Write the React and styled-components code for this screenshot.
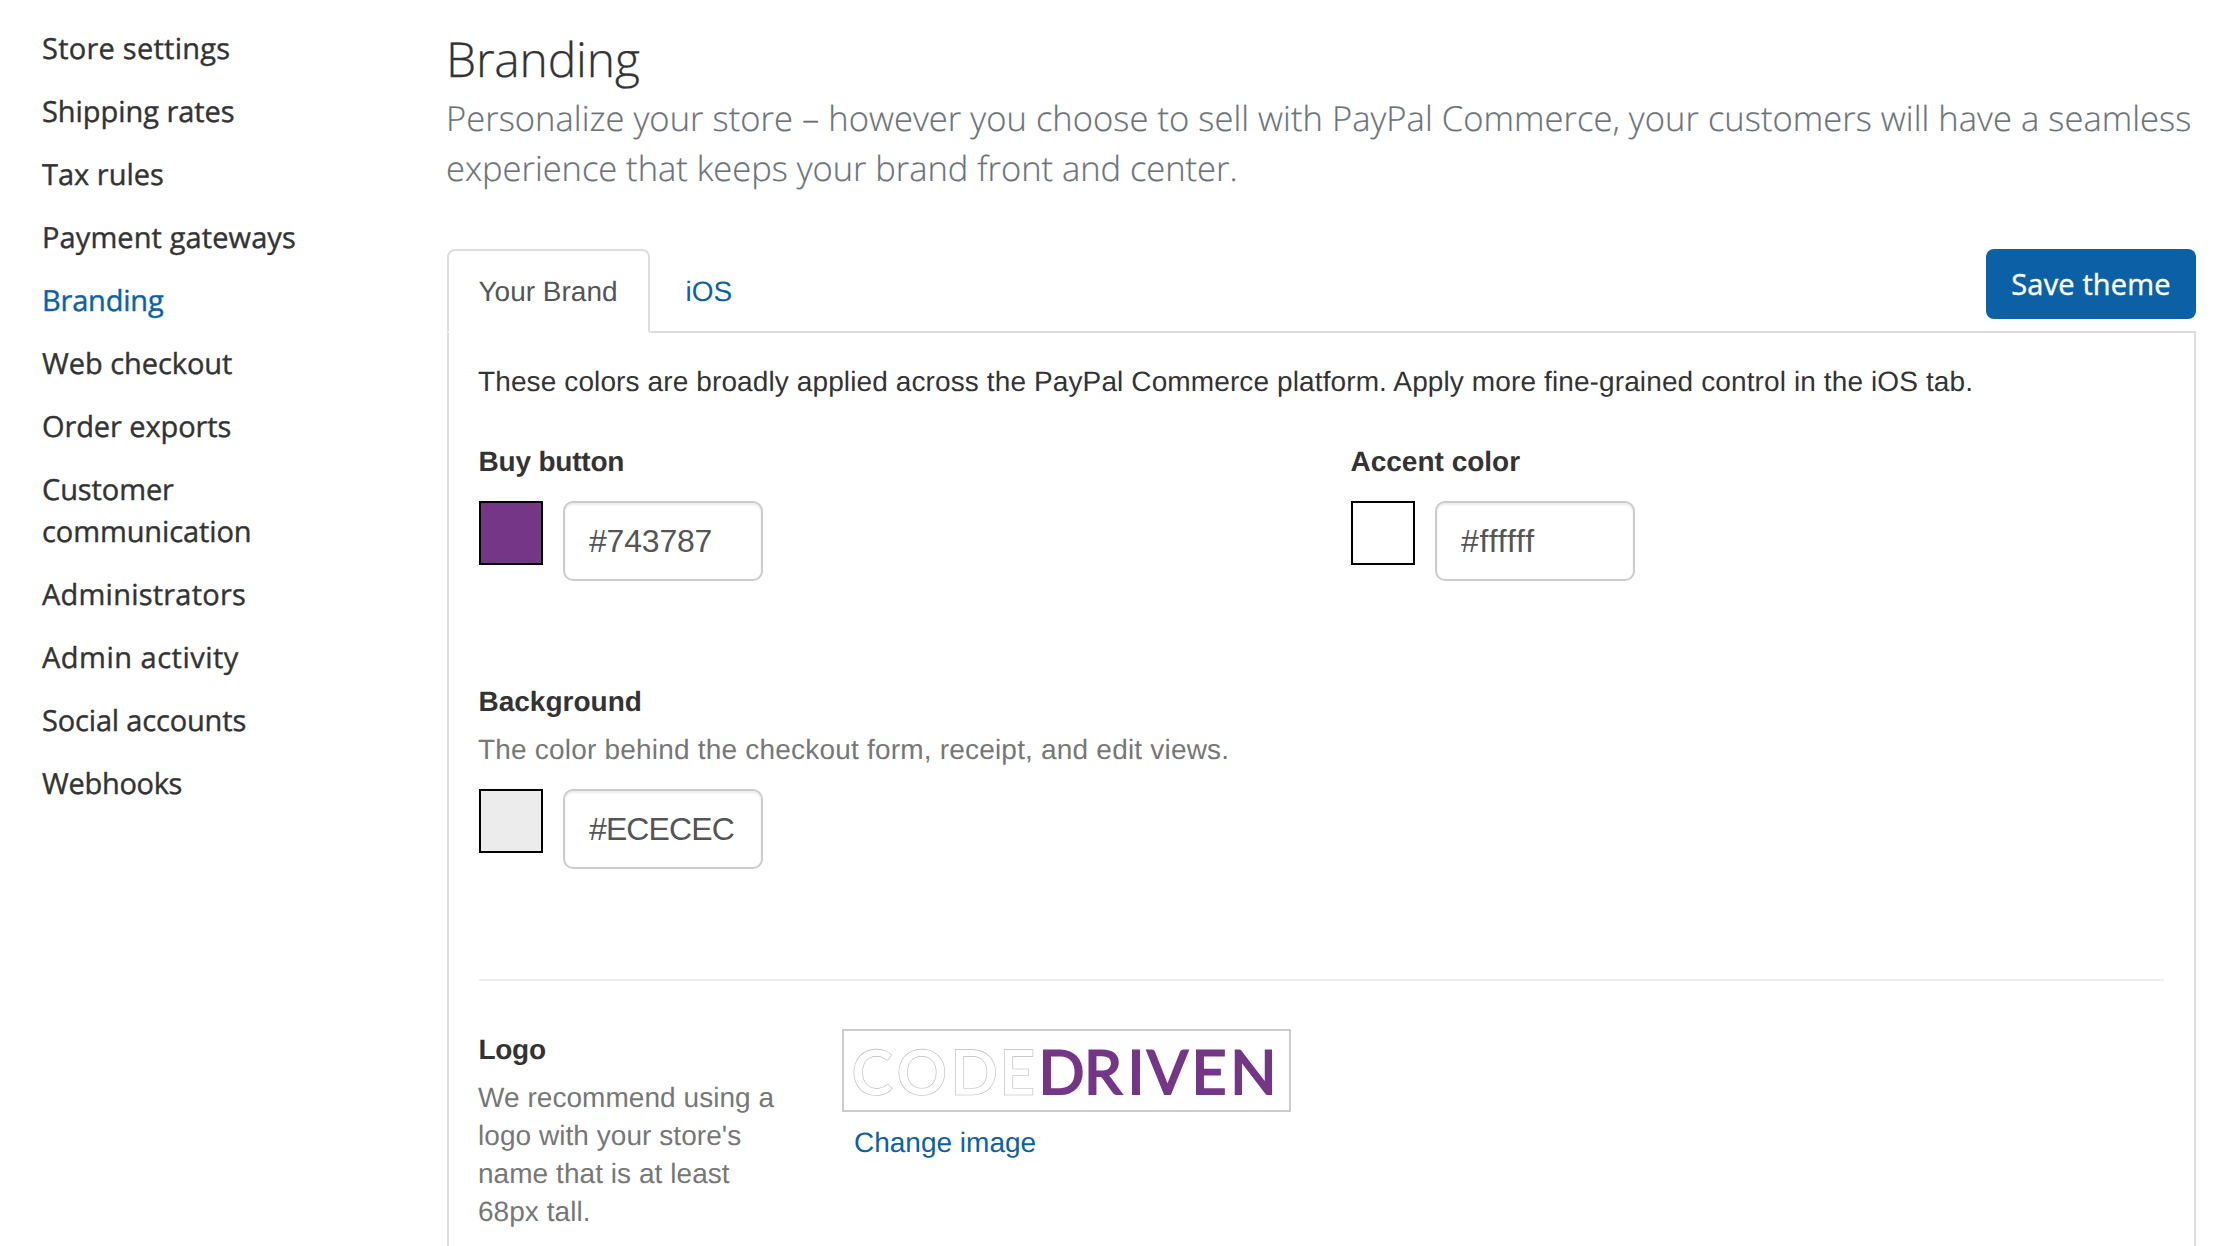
import React from "react";
import styled, { createGlobalStyle } from "styled-components";

const humanist = `"Open Sans", "Noto Sans", sans-serif`;
const grotesque = `"Liberation Sans", Arial, sans-serif`;

const GlobalStyle = createGlobalStyle`
  * { box-sizing: border-box; }
  body {
    margin: 0;
    background: #fff;
    color: #333;
    font-family: ${grotesque};
    text-rendering: geometricPrecision;
    overflow: hidden;
  }
`;

const Page = styled.div`
  display: flex;
  height: 1246px;
  overflow: hidden;
`;

const Sidebar = styled.nav`
  flex: 0 0 446px;
  padding: 28px 140px 0 42px;
`;

const NavList = styled.ul`
  display: flex;
  flex-direction: column;
  gap: 21px;
  margin: 0;
  padding: 0;
  list-style: none;
`;

const NavItem = styled.li`
  font: 400 29px/42px ${humanist};
  -webkit-text-stroke: 0.4px currentColor;
  letter-spacing: ${(p) => p.$track || 0}px;
  color: ${(p) => (p.$active ? "#0c61a6" : "#333")};
`;

const Main = styled.main`
  display: flex;
  flex-direction: column;
  width: 1750px;
  padding: 30px 0 0 1px;
`;

const Title = styled.h1`
  margin: 0 0 4px -1px;
  font: 300 48px/60px ${humanist};
  letter-spacing: -0.2px;
  -webkit-text-stroke: 0.3px currentColor;
`;

const Lead = styled.p`
  margin: 0 0 55px -1px;
  font: 300 34.5px/50px ${humanist};
  color: #6c7378;
  white-space: nowrap;
  -webkit-text-stroke: 0.2px currentColor;
`;

const LeadLine = styled.span`
  display: block;
  letter-spacing: ${(p) => p.$track}px;
`;

const TabBar = styled.div`
  display: flex;
  justify-content: space-between;
  align-items: flex-start;
  height: 84px;
  border-bottom: 2px solid #ddd;
`;

const Tabs = styled.div`
  display: flex;
  gap: 4px;
`;

const Tab = styled.div`
  height: 84px;
  padding: 22px 30.5px 0 29.5px;
  border: 2px solid ${(p) => (p.$active ? "#ddd" : "transparent")};
  border-bottom-color: ${(p) => (p.$active ? "#fff" : "transparent")};
  border-radius: 8px 8px 0 0;
  font-size: 28px;
  line-height: 38px;
  color: ${(p) => (p.$active ? "#555" : "#0c61a6")};
`;

const SaveButton = styled.button`
  width: 210px;
  height: 70px;
  padding: 0 0 1px;
  border: 0;
  border-radius: 8px;
  background: #0c61a6;
  color: #fff;
  font: 400 29px/40px ${humanist};
  letter-spacing: 0.15px;
  -webkit-text-stroke: 0.4px currentColor;
`;

const Panel = styled.section`
  flex: 1;
  padding: 30px 30px 0;
  border: solid #ddd;
  border-width: 0 2px;
`;

const Intro = styled.p`
  margin: 0 0 42px -1px;
  font-size: 28px;
  line-height: 38px;
  letter-spacing: 0.115px;
`;

const ColorRow = styled.div`
  display: grid;
  grid-template-columns: 872px 1fr;
  margin-bottom: ${(p) => p.$gap}px;
`;

const Label = styled.h2`
  margin: 0 0 0 -0.5px;
  font: bold 28px/38px ${grotesque};
  letter-spacing: ${(p) => p.$track || 0}px;
`;

const Hint = styled.p`
  margin: 10px 0 0 -1px;
  font-size: 28px;
  line-height: 38px;
  letter-spacing: ${(p) => p.$track}px;
  color: #777;
`;

const Picker = styled.div`
  display: flex;
  align-items: flex-start;
  gap: 20px;
  margin-top: 20px;
`;

const Swatch = styled.div`
  width: 64px;
  height: 64px;
  border: 2px solid #000;
  background: ${(p) => p.$color};
`;

const HexInput = styled.input`
  width: 200px;
  height: 80px;
  padding: 1px 0 0 24px;
  border: 2px solid #ccc;
  border-radius: 10px;
  box-shadow: inset 0 2px 2px rgba(0, 0, 0, 0.075);
  background: #fff;
  color: #555;
  font: 32px/44px ${grotesque};
  letter-spacing: ${(p) => p.$track}px;
`;

const Divider = styled.hr`
  height: 2px;
  margin: 0;
  border: 0;
  background: #eee;
`;

const LogoRow = styled.div`
  display: grid;
  grid-template-columns: 300px 450px;
  column-gap: 63px;
  padding-top: 48px;
`;

const LogoInfo = styled.div`
  padding-top: 2px;
  white-space: nowrap;
`;

const LogoFrame = styled.div`
  width: 449px;
  height: 83px;
  border: 2px solid #ccc;
`;

const Wordmark = styled.svg`
  display: block;
  font-family: Lato, sans-serif;
`;

const OutlinedWord = styled.text`
  font-size: 62.7px;
  font-weight: 700;
  fill: #fff;
  stroke: #bbb;
  stroke-width: 0.6px;
`;

const SolidWord = styled.text`
  font-size: 60.6px;
  font-weight: 400;
  fill: #743787;
  stroke: #743787;
  stroke-width: 2.1px;
`;

const ChangeLink = styled.a`
  display: block;
  margin: 12px 0 0 12px;
  font-size: 28px;
  line-height: 38px;
  color: #0c61a6;
`;

const navItems = [
  ["Store settings", 0.25],
  ["Shipping rates", -0.05],
  ["Tax rules", 0],
  ["Payment gateways", 0.1],
  ["Branding", -0.2],
  ["Web checkout", -0.05],
  ["Order exports", -0.1],
  ["Customer communication", -0.1],
  ["Administrators", 0.22],
  ["Admin activity", 0.5],
  ["Social accounts", -0.17],
  ["Webhooks", -0.3],
];

function ColorField({ label, labelTrack, hint, value, track }) {
  return (
    <div>
      <Label $track={labelTrack}>{label}</Label>
      {hint && <Hint $track={0.2}>{hint}</Hint>}
      <Picker>
        <Swatch $color={value} />
        <HexInput defaultValue={value} $track={track} />
      </Picker>
    </div>
  );
}

export default function App() {
  return (
    <>
      <GlobalStyle />
      <Page>
        <Sidebar>
          <NavList>
            {navItems.map(([name, track]) => (
              <NavItem key={name} $track={track} $active={name === "Branding"}>
                {name}
              </NavItem>
            ))}
          </NavList>
        </Sidebar>
        <Main>
          <Title>Branding</Title>
          <Lead>
            <LeadLine $track={0.045}>
              Personalize your store – however you choose to sell with PayPal Commerce, your customers will have a seamless
            </LeadLine>
            <LeadLine $track={-0.03}>experience that keeps your brand front and center.</LeadLine>
          </Lead>
          <TabBar>
            <Tabs>
              <Tab $active>Your Brand</Tab>
              <Tab>iOS</Tab>
            </Tabs>
            <SaveButton>Save theme</SaveButton>
          </TabBar>
          <Panel>
            <Intro>
              These colors are broadly applied across the PayPal Commerce platform. Apply more fine-grained control in the iOS tab.
            </Intro>
            <ColorRow $gap={102}>
              <ColorField label="Buy button" labelTrack={-0.2} value="#743787" track={-0.2} />
              <ColorField label="Accent color" value="#ffffff" track={0.8} />
            </ColorRow>
            <ColorRow $gap={110}>
              <ColorField
                label="Background"
                hint="The color behind the checkout form, receipt, and edit views."
                value="#ECECEC"
                track={-0.9}
              />
            </ColorRow>
            <Divider />
            <LogoRow>
              <LogoInfo>
                <Label $track={-0.3}>Logo</Label>
                <Hint $track={0.05}>
                  We recommend using a<br />
                  logo with your store's<br />
                  name that is at least<br />
                  68px tall.
                </Hint>
              </LogoInfo>
              <div>
                <LogoFrame>
                  <Wordmark width="445" height="79" viewBox="0 0 445 79">
                    <OutlinedWord x="7.5 52.5 106.3 155.3" y="64">
                      CODE
                    </OutlinedWord>
                    <SolidWord x="194.6 240 283.6 303 347.6 386.2" y="63">
                      DRIVEN
                    </SolidWord>
                  </Wordmark>
                </LogoFrame>
                <ChangeLink>Change image</ChangeLink>
              </div>
            </LogoRow>
          </Panel>
        </Main>
      </Page>
    </>
  );
}
